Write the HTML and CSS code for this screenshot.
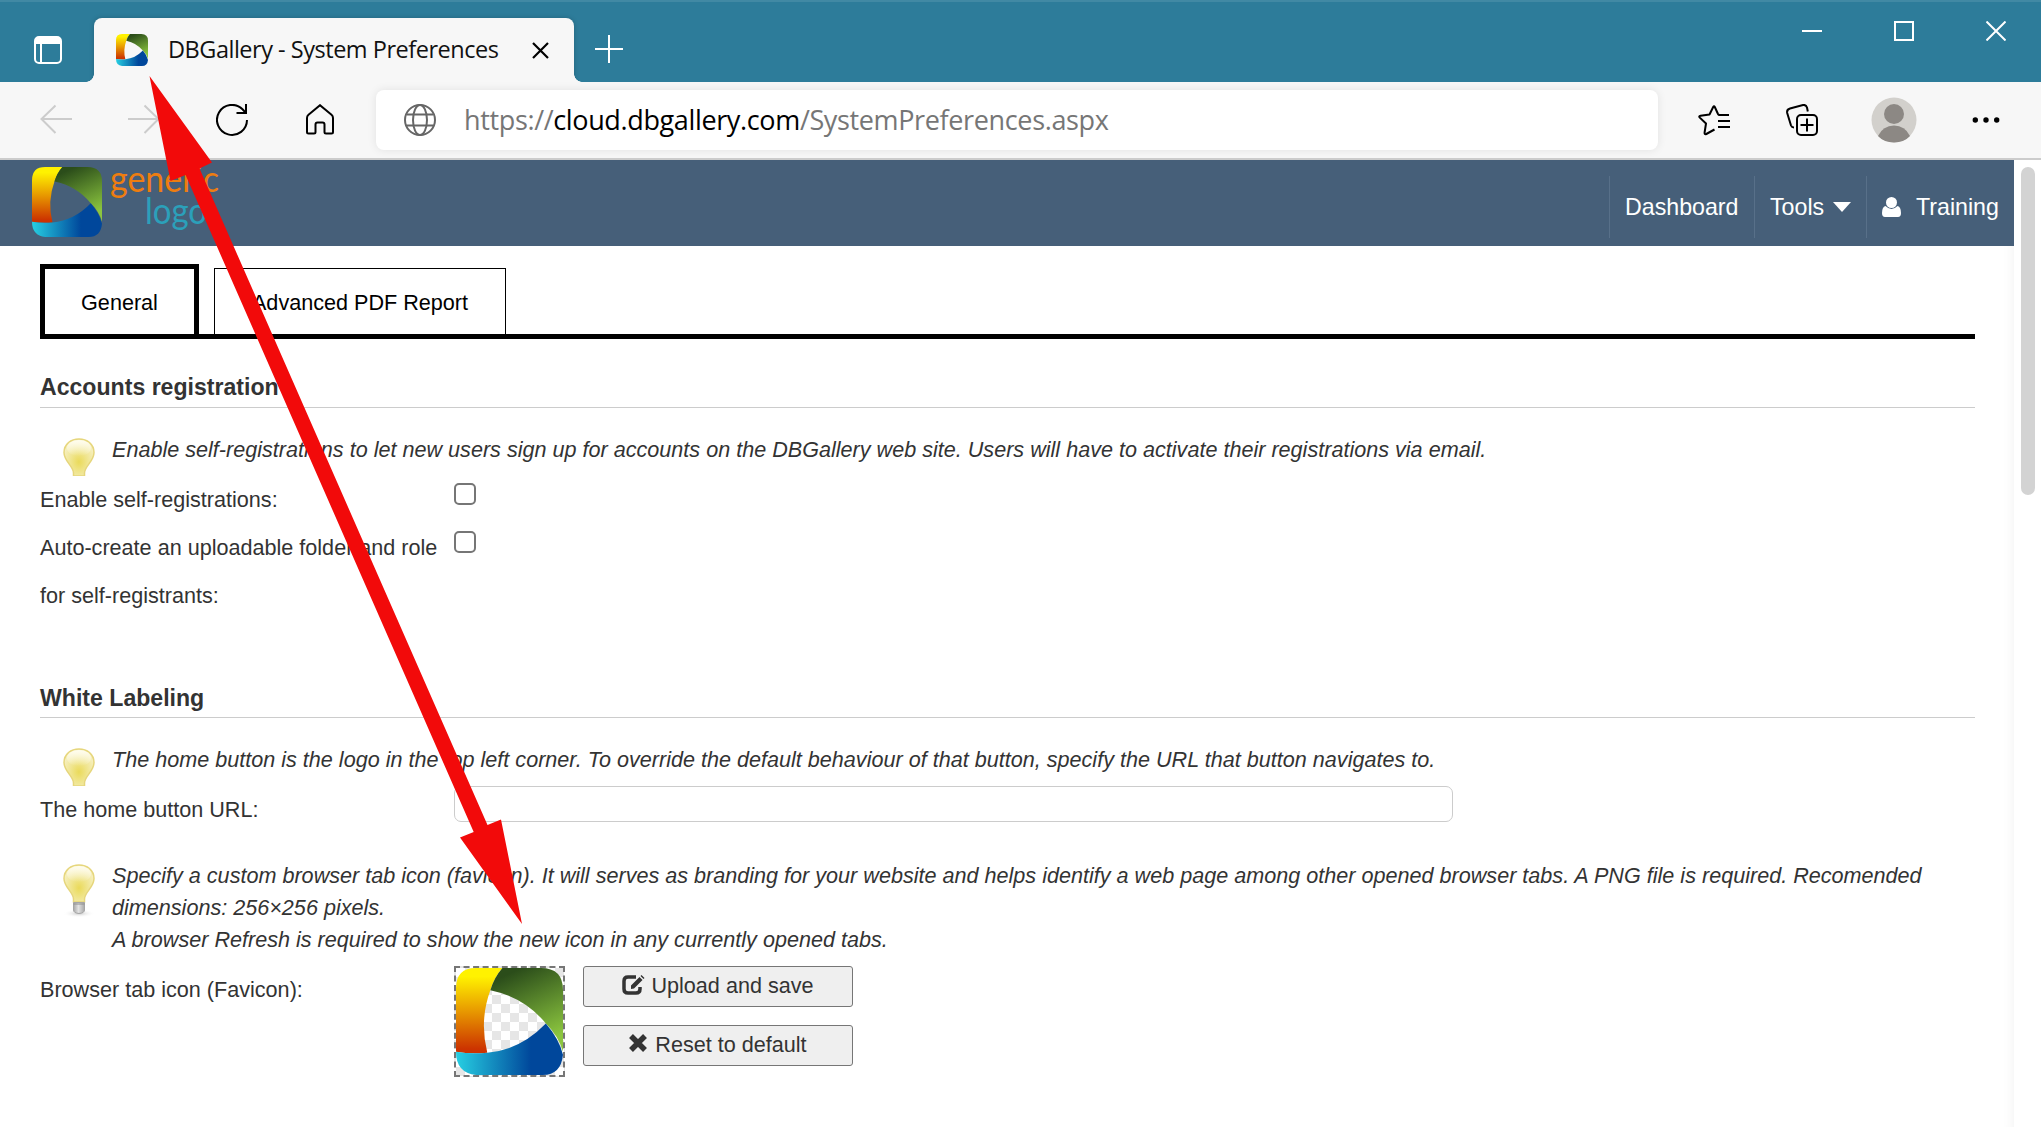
FILE: index.html
```html
<!DOCTYPE html>
<html lang="en">
<head>
<meta charset="utf-8">
<title>DBGallery - System Preferences</title>
<link rel="stylesheet" href="styles.css">
</head>
<body>
<svg class="defs" width="0" height="0" aria-hidden="true">
  <defs>
    <linearGradient id="gYellow" x1="0" y1="0" x2="0" y2="1"><stop offset=".1" stop-color="#fff200"/><stop offset=".5" stop-color="#e89a00"/><stop offset=".95" stop-color="#cc3300"/></linearGradient>
    <linearGradient id="gGreen" x1=".2" y1="0" x2=".6" y2="1"><stop offset=".08" stop-color="#2b4d1a"/><stop offset=".95" stop-color="#8cc63f"/></linearGradient>
    <linearGradient id="gBlue" x1="0" y1="0" x2="1" y2="0"><stop offset="0" stop-color="#27cfe2"/><stop offset=".7" stop-color="#00479b"/></linearGradient>
    <linearGradient id="gBase" x1="0" y1="0" x2="1" y2="0"><stop offset="0" stop-color="#a8a8a8"/><stop offset=".45" stop-color="#e2e2e2"/><stop offset="1" stop-color="#a8a8a8"/></linearGradient>
    <radialGradient id="gShadow"><stop offset="0" stop-color="#c9c9c9"/><stop offset="1" stop-color="#fff" stop-opacity="0"/></radialGradient>
    <radialGradient id="gBulb" cx=".5" cy=".62" r=".55"><stop offset="0" stop-color="#eada5a"/><stop offset=".6" stop-color="#f1e797"/><stop offset="1" stop-color="#f6efbd"/></radialGradient>
    <linearGradient id="gShine" x1="0" y1="0" x2="0" y2="1"><stop offset="0" stop-color="#fffdf0"/><stop offset="1" stop-color="#fffdf0" stop-opacity="0"/></linearGradient>
    <symbol id="logo" viewBox="0 0 106 106">
      <path fill="url(#gYellow)" d="M20 0H46Q38 9 34 22Q23 52 31 84Q15 85.500 0 83V20Q0 0 20 0Z"/>
      <path fill="url(#gGreen)" d="M46 0H84Q106 0 106 22V83Q102 68 89 55Q68 29 34 22Q38 9 46 0Z"/>
      <path fill="url(#gBlue)" d="M0 83Q15 85.500 31 84Q64 81 89 55Q102 70 106 86Q104 106 86 106H20Q0 104 0 83Z"/>
    </symbol>
    <symbol id="bulb" viewBox="0 0 32 54">
      <ellipse cx="16" cy="49.500" rx="16" ry="4" fill="url(#gShadow)"/>
      <path d="M10.500 38V35C10.500 28 1 23.500 1 14.500C1 6 8 1 16 1S31 6 31 14.500C31 23.500 21.500 28 21.500 35V38Z" fill="url(#gBulb)" stroke="#e6d67c" stroke-width="1.500"/>
      <ellipse cx="16" cy="10" rx="12" ry="8" fill="url(#gShine)"/>
      <path d="M10.500 38.500H21.500V46Q21.500 49 16 49.500Q10.500 49 10.500 46Z" fill="url(#gBase)" stroke="#a6a6a6"/>
      <path d="M10.500 40H21.500" stroke="#8f8f8f"/>
    </symbol>
  </defs>
</svg>

<div class="window">
  <header class="titlebar">
    <svg class="tab-actions" viewBox="0 0 28 28"><rect x="1" y="1" width="26" height="26" rx="4" fill="none" stroke="#fff" stroke-width="2"/><path d="M1 8V5Q1 1 5 1H23Q27 1 27 5V8Z" fill="#fff"/><path d="M7 8V27" stroke="#fff" stroke-width="2"/></svg>
    <div class="tab">
      <svg class="tab-icon"><use href="#logo"/></svg>
      <span class="tab-title">DBGallery - System Preferences</span>
      <svg class="tab-close" viewBox="0 0 17 17"><path d="M1 1L16 16M16 1L1 16" stroke="#000" stroke-width="2.200"/></svg>
    </div>
    <svg class="new-tab" viewBox="0 0 28 28"><path d="M14 0V28M0 14H28" stroke="#fff" stroke-width="2"/></svg>
    <div class="window-buttons">
      <svg viewBox="0 0 20 20"><path d="M0 10H20" stroke="#fff" stroke-width="2"/></svg>
      <svg viewBox="0 0 20 20"><rect x="1" y="1" width="18" height="18" fill="none" stroke="#fff" stroke-width="2"/></svg>
      <svg viewBox="0 0 20 20"><path d="M.5 .5L19.500 19.500M19.500 .5L.5 19.500" stroke="#fff" stroke-width="2"/></svg>
    </div>
  </header>

  <nav class="toolbar">
    <svg class="nav-back" viewBox="0 0 32 32"><path d="M32 15H1M15.500 1.500L1.500 15L15.500 29" fill="none" stroke="#ccc" stroke-width="2"/></svg>
    <svg class="nav-forward" viewBox="0 0 32 32"><path d="M0 15H31M16.500 1.500L30.500 15L16.500 29" fill="none" stroke="#ccc" stroke-width="2"/></svg>
    <svg class="nav-reload" viewBox="0 0 32 32"><path d="M31 16A15 15 0 1 1 26.500 5.200L30 9M30 0V9H20.500" fill="none" stroke="#000" stroke-width="2"/></svg>
    <svg class="nav-home" viewBox="0 0 32 32"><path d="M3 14Q3 12 4.500 10.800L16 1.200L27.500 10.800Q29 12 29 14V28Q29 29.500 27.500 29.500H22Q20.500 29.500 20.500 28V20.500Q20.500 18.500 18.500 18.500H13.500Q11.500 18.500 11.500 20.500V28Q11.500 29.500 10 29.500H4.500Q3 29.500 3 28Z" fill="none" stroke="#000" stroke-width="2"/></svg>
    <div class="address">
      <svg viewBox="0 0 32 32"><g fill="none" stroke="#666" stroke-width="2"><circle cx="16" cy="16" r="15"/><ellipse cx="16" cy="16" rx="7" ry="15"/><path d="M2.500 10.500H29.500M2.500 21.500H29.500"/></g></svg>
      <span class="url">https://<b>cloud.dbgallery.com</b>/SystemPreferences.aspx</span>
    </div>
    <svg class="favorites" viewBox="0 0 32 32"><path d="M31 11H21.500Q20.500 11 20 10L16.800 3Q16 1.500 15.200 3L11.500 10.500L2.500 11.800Q.5 12.200 1.800 13.600L8 19.500L6.600 28.500Q6.400 30.800 8.300 30L16.500 25.500M20 17H32M20 23H32" fill="none" stroke="#000" stroke-width="2" stroke-linejoin="round"/></svg>
    <svg class="collections" viewBox="0 0 32 32"><g fill="none" stroke="#000" stroke-width="2"><rect x="11" y="11" width="20" height="20" rx="4"/><path d="M21 14.500V27.500M14.500 21H27.500M21.800 7.500L21 3.500Q20 .5 17 1L4 4.500Q.5 5.500 1.200 9L5 21.500Q5.800 23.500 8 23.500"/></g></svg>
    <svg class="avatar" viewBox="0 0 46 46"><circle cx="23" cy="23" r="22.500" fill="#d2d0cc"/><circle cx="23" cy="17" r="10" fill="#8c8884"/><path d="M7 39Q12 28.500 23 28.500T39 39Q33 45.500 23 45.500T7 39Z" fill="#8c8884"/></svg>
    <svg class="more" viewBox="0 0 28 28"><circle cx="3.300" cy="14" r="2.700"/><circle cx="14" cy="14" r="2.700"/><circle cx="24.700" cy="14" r="2.700"/></svg>
  </nav>

  <div class="viewport">
    <div class="page">
      <div class="site-header">
        <svg class="brand-mark"><use href="#logo"/></svg>
        <svg class="brand-name" viewBox="0 0 110 70"><text x="-1" y="25" textLength="109" lengthAdjust="spacingAndGlyphs" fill="#ee7d10">generic</text><text x="34" y="57" textLength="62" lengthAdjust="spacingAndGlyphs" fill="#2ba0ba">logo</text></svg>
        <div class="site-menu">
          <a class="menu-dashboard">Dashboard</a>
          <a class="menu-tools">Tools<svg class="caret" viewBox="0 0 18 10"><path d="M0 0H18L9 10Z" fill="#fff"/></svg></a>
          <a class="menu-user"><svg class="user" viewBox="0 0 19 20"><path d="M3.500 9Q0 10 0 16Q0 20 3 20H16Q19 20 19 16Q19 10 15.500 9Q12.500 12 9.500 12T3.500 9Z" fill="#fff"/><circle cx="9.500" cy="5.500" r="5.500" fill="#fff"/></svg>Training</a>
        </div>
      </div>

      <main class="content">
        <div class="tabs">
          <div class="pref-tab active">General</div>
          <div class="pref-tab">Advanced PDF Report</div>
        </div>

        <section class="accounts">
          <h2>Accounts registration</h2>
          <div class="hint short"><svg class="bulb" viewBox="0 0 32 38"><use href="#bulb" width="32" height="54"/></svg><p>Enable self-registrations to let new users sign up for accounts on the DBGallery web site. Users will have to activate their registrations via email.</p></div>
          <div class="row"><label>Enable self-registrations:</label><span class="check"></span></div>
          <div class="row"><label>Auto-create an uploadable folder and role<br>for self-registrants:</label><span class="check"></span></div>
        </section>

        <section class="branding">
          <h2>White Labeling</h2>
          <div class="hint short"><svg class="bulb" viewBox="0 0 32 38"><use href="#bulb" width="32" height="54"/></svg><p>The home button is the logo in the top left corner. To override the default behaviour of that button, specify the URL that button navigates to.</p></div>
          <div class="row"><label>The home button URL:</label><span class="text-input"></span></div>
          <div class="hint long"><svg class="bulb" viewBox="0 0 32 54"><use href="#bulb" width="32" height="54"/></svg><p>Specify a custom browser tab icon (favicon). It will serves as branding for your website and helps identify a web page among other opened browser tabs. A PNG file is required. Recomended<br>dimensions: 256×256 pixels.<br>A browser Refresh is required to show the new icon in any currently opened tabs.</p></div>
          <div class="row favicon-row">
            <label>Browser tab icon (Favicon):</label>
            <div class="favicon-box"><svg><use href="#logo"/></svg></div>
            <div class="buttons">
              <div class="button upload"><svg viewBox="0 0 23 20"><path d="M14 2H6Q2 2 2 6V14Q2 18 6 18H14Q18 18 18 14V12" fill="none" stroke="#333" stroke-width="3.500"/><path d="M9 14V10.500L17.500 2L20.500 5L12 13.500ZM18.500 1L19.500 0L22.500 3L21.500 4Z" fill="#333"/></svg>Upload and save</div>
              <div class="button reset"><svg viewBox="0 0 18 18"><path d="M2 2L16 16M16 2L2 16" stroke="#333" stroke-width="5.500"/></svg>Reset to default</div>
            </div>
          </div>
        </section>
      </main>
    </div>
    <div class="scrollbar"><div class="thumb"></div></div>
  </div>
</div>

<svg class="callout" viewBox="0 0 2041 1127"><path fill="#f20a0a" d="M149.500 76L212 162.500L199.500 168.500L487.500 825L501 819.500L522 924L460 837.500L473.700 832L185.600 175L170.500 181Z"/></svg>
</body>
</html>
```
FILE: styles.css
```css
* { box-sizing: border-box; }
body { margin: 0; font-family: "Liberation Sans", Arial, sans-serif; font-size: 21.6px; color: #333; background: #fff; overflow: hidden; }
svg { display: block; flex: none; }
.defs { position: absolute; }
.window { display: flex; flex-direction: column; width: 2041px; height: 1127px; }

.titlebar { display: flex; align-items: flex-start; height: 82px; flex: none; background: #2d7c9a; border-top: 2px solid #4189a4; padding-left: 34px; }
.tab-actions { width: 28px; height: 28px; margin-top: 34px; }
.tab { position: relative; display: flex; align-items: center; width: 480px; height: 64px; margin: 16px 0 0 32px; padding: 0 25px 0 22px; background: #f7f7f7; border-radius: 8px 8px 0 0; box-shadow: 0 0 5px rgba(0,0,0,.2); clip-path: inset(-6px -8px 0 -8px); }
.tab::before, .tab::after { content: ""; position: absolute; bottom: 0; width: 8px; height: 8px; }
.tab::before { left: -8px; background: radial-gradient(circle at 0 0, transparent 7.500px, #f7f7f7 8px); }
.tab::after { right: -8px; background: radial-gradient(circle at 100% 0, transparent 7.500px, #f7f7f7 8px); }
.tab-icon { width: 32px; height: 32px; }
.tab-title { margin: -2px 0 0 20px; flex: 1; font: 23.500px/32px "Open Sans", "Noto Sans", sans-serif; letter-spacing: -.48px; color: #111; white-space: nowrap; }
.tab-close { width: 17px; height: 17px; margin-top: 1px; }
.new-tab { width: 28px; height: 28px; margin: 33px 0 0 21px; }
.window-buttons { display: flex; gap: 72px; margin: 19px 35px 0 auto; }
.window-buttons svg { width: 20px; height: 20px; }

.toolbar { display: flex; align-items: center; height: 78px; flex: none; padding: 0 41px 0 40px; background: #f7f7f7; border-bottom: 2px solid #ccc; }
.toolbar > svg { width: 32px; height: 32px; }
.nav-forward { margin-left: 56px; }
.nav-reload { margin-left: 56px; }
.nav-home { margin-left: 56px; }
.address { display: flex; align-items: center; width: 1282px; height: 60px; margin-left: 40px; padding-left: 28px; background: #fff; border-radius: 8px; box-shadow: 0 0 10px rgba(0,0,0,.09); }
.address svg { width: 32px; height: 32px; }
.url { margin-left: 28px; font: 27px/40px "Open Sans", "Noto Sans", sans-serif; letter-spacing: -.36px; color: #767676; white-space: nowrap; }
.url b { font-weight: 400; color: #000; }
.favorites { margin-left: 40px; }
.collections { margin-left: 56px; }
.toolbar > .avatar { width: 46px; height: 46px; margin-left: 53px; }
.toolbar > .more { width: 28px; height: 28px; margin-left: 55px; }

.viewport { display: flex; flex: 1; min-height: 0; }
.page { width: 2014px; box-shadow: inset -14px 0 14px -14px rgba(0,0,0,.06); }
.scrollbar { flex: 1; padding: 7px 6px 0 7px; }
.thumb { height: 328px; border-radius: 7px; background: #d3d3d3; }

.site-header { display: flex; height: 86px; padding: 7px 0 0 32px; background: #465f79; }
.brand-mark { width: 70px; height: 70px; }
.brand-name { width: 110px; height: 70px; margin-left: 9px; font: 400 37px Lato, sans-serif; overflow: visible; }
.site-menu { display: flex; margin: 9px 0 0 auto; height: 62px; color: #fff; font-size: 23.2px; }
.site-menu a { display: flex; align-items: center; border-left: 1px solid #587089; padding-left: 15px; }
.menu-dashboard { width: 145px; }
.menu-tools { width: 112px; }
.menu-user { width: 148px; }
.caret { width: 18px; height: 10px; margin-left: 9px; }
.user { width: 19px; height: 20px; margin-right: 15px; }

.content { padding: 18px 39px 0 40px; }
.tabs { display: flex; align-items: flex-end; height: 75px; border-bottom: 5px solid #000; color: #000; }
.pref-tab { height: 66px; width: 292px; border: 1px solid #000; border-bottom: 0; text-align: center; line-height: 67px; }
.pref-tab.active { width: 159px; height: 70px; border-width: 5px 5px 0; margin-right: 15px; }
h2 { margin: 0; height: 36px; border-bottom: 1px solid #ccc; font-size: 23.1px; line-height: 30px; }
.accounts { padding-top: 33px; height: 344px; }
.branding h2 { height: 35px; }
.hint { display: flex; padding-left: 23px; }
.hint p { margin: -4px 0 0; padding-left: 17px; font-style: italic; line-height: 32px; white-space: nowrap; }
.bulb { width: 32px; height: 54px; }
.short { padding-top: 30px; height: 68px; }
.short .bulb { height: 38px; }
.long { padding-top: 30px; height: 132px; }
.row { display: flex; line-height: 48px; }
.row label { width: 414px; white-space: nowrap; }
.check { width: 22px; height: 22px; margin-top: 7px; border: 2px solid #767676; border-radius: 5px; }
.text-input { width: 999px; height: 36px; border: 1px solid #ccc; border-radius: 7px; }
.favicon-box { width: 111px; height: 111px; border: 2px dashed #767676; background: repeating-conic-gradient(#e6e6e6 0 25%, #fff 0 50%) 0 0 / 18px 18px; }
.favicon-box svg { width: 107px; height: 107px; }
.buttons { display: flex; flex-direction: column; gap: 18px; margin-left: 18px; }
.button { display: flex; justify-content: center; width: 270px; height: 41px; border: 1px solid #767676; border-radius: 3px; background: #efefef; line-height: 37px; }
.upload svg { width: 23px; height: 20px; margin: 8px 6px 0 0; }
.reset svg { width: 18px; height: 18px; margin: 8px 8px 0 0; }
.callout { position: absolute; left: 0; top: 0; width: 2041px; height: 1127px; pointer-events: none; }
```
